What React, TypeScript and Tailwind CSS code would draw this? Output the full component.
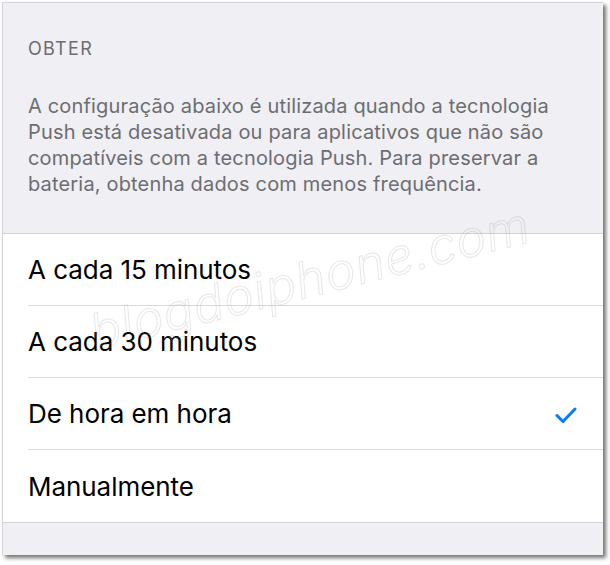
import React from "react";

const font = { fontFamily: '"Inter", "Roboto", "Liberation Sans", sans-serif' };

function Row({ label, checked, last }: { label: string; checked?: boolean; last?: boolean }) {
  return (
    <div className="pl-[25px] bg-white">
      <div
        className={
          "h-[72px] flex items-center justify-between pr-[26px] " +
          (last ? "" : "border-b border-[#d9d9dc]")
        }
      >
        <span className="text-[26px] text-black tracking-[-0.05px]">{label}</span>
        {checked && (
          <svg width="22" height="18" viewBox="0 0 22 18" className="mt-[2px]">
            <path d="M2 9.5 L8 15.5 L20 3" fill="none" stroke="#0a7aff" strokeWidth="3" strokeLinecap="round" strokeLinejoin="round" />
          </svg>
        )}
      </div>
    </div>
  );
}

export default function App() {
  const lines = [
    "A configuração abaixo é utilizada quando a tecnologia",
    "Push está desativada ou para aplicativos que não são",
    "compatíveis com a tecnologia Push. Para preservar a",
    "bateria, obtenha dados com menos frequência.",
  ];
  return (
    <div className="w-[610px] h-[565px] bg-white pt-[2px] pl-[2px]" style={font}>
      <div className="relative w-[601px] h-[553px] bg-[#efeff4] border-l border-t border-[#d4d4d8] shadow-[3px_3px_4px_rgba(0,0,0,0.55)] overflow-hidden flex flex-col">
        <div className="h-[230px] px-[25px] pt-[36px]">
          <div className="text-[18px] text-[#6d6d72] tracking-[1.3px] leading-[20px]">OBTER</div>
          <div className="mt-[34px] text-[20px] leading-[26px] text-[#6d6d72] tracking-[0.17px]">
            {lines.map((l) => (
              <div key={l} className="whitespace-nowrap">{l}</div>
            ))}
          </div>
        </div>
        <div className="border-t border-b border-[#d1d1d5]">
          <Row label="A cada 15 minutos" />
          <Row label="A cada 30 minutos" />
          <Row label="De hora em hora" checked />
          <Row label="Manualmente" last />
        </div>
        <div className="flex-1" />
        <div className="absolute left-[88px] top-[305px] -rotate-[14deg] origin-left pointer-events-none leading-none">
          <span
            className="text-[50px] italic font-light text-transparent tracking-[1px]"
            style={{ WebkitTextStroke: "1px rgba(160,160,160,0.25)" }}
          >
            blogdoiphone.com
          </span>
        </div>
      </div>
    </div>
  );
}
